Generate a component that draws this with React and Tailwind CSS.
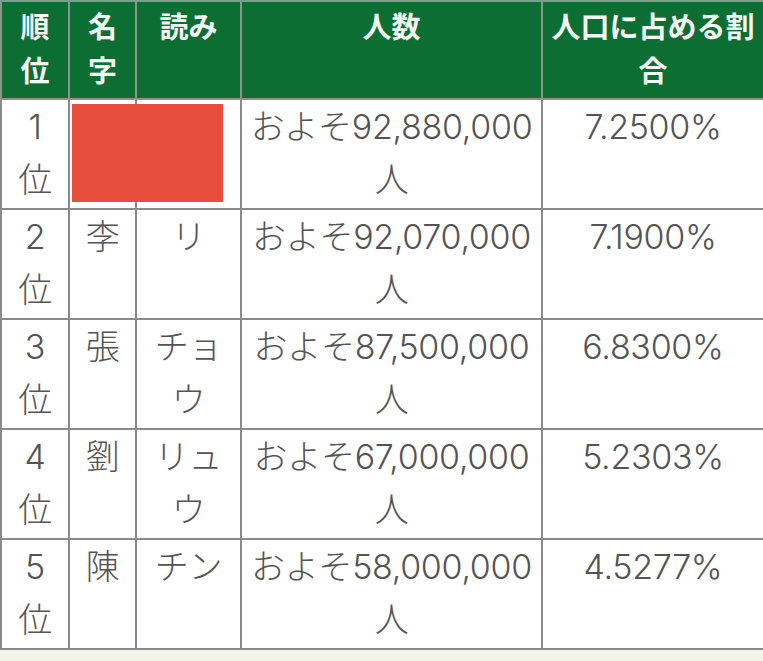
import React from "react";

const rows = [
  { rank: "1", name: "", yomi: [""], num: "92,880,000", pct: "7.2500%" },
  { rank: "2", name: "李", yomi: ["リ"], num: "92,070,000", pct: "7.1900%" },
  { rank: "3", name: "張", yomi: ["チョ", "ウ"], num: "87,500,000", pct: "6.8300%" },
  { rank: "4", name: "劉", yomi: ["リュ", "ウ"], num: "67,000,000", pct: "5.2303%" },
  { rank: "5", name: "陳", yomi: ["チン"], num: "58,000,000", pct: "4.5277%" },
];

const th =
  "border-2 border-[#8c948c] bg-[#0d6e34] text-[#f4f8f4] font-bold text-[29px] leading-[44px] align-top text-center pt-1 px-0 whitespace-nowrap";
const td =
  "border-2 border-[#8a8a8a] bg-white text-[#545454] text-[34px] leading-[53px] align-top text-center p-0 whitespace-nowrap tracking-[-0.3px]";

export default function App() {
  return (
    <div
      className="min-h-[661px] w-[763px] bg-[#f3f4e8]"
      style={{ fontFamily: 'Inter, "Noto Sans CJK JP", sans-serif' }}
    >
      <div className="relative w-[763px]">
        <table className="w-[763px] table-fixed border-collapse">
          <colgroup>
            <col className="w-[68px]" />
            <col className="w-[67px]" />
            <col className="w-[105px]" />
            <col className="w-[301px]" />
            <col className="w-[222px]" />
          </colgroup>
          <thead>
            <tr className="h-[98px]">
              <th className={th}>
                順<br />位
              </th>
              <th className={th}>
                名<br />字
              </th>
              <th className={th}>読み</th>
              <th className={th}>人数</th>
              <th className={th}>
                人口に占める割<br />合
              </th>
            </tr>
          </thead>
          <tbody>
            {rows.map((r) => (
              <tr key={r.rank} className="h-[110px]">
                <td className={td}>
                  <span className="font-light">{r.rank}</span>
                  <br />
                  <span className="font-light">位</span>
                </td>
                <td className={td}>
                  <span className="font-light">{r.name}</span>
                </td>
                <td className={td}>
                  {r.yomi.map((y, i) => (
                    <div key={i} className="font-light">
                      {y}
                    </div>
                  ))}
                </td>
                <td className={td}>
                  <div className="font-light">およそ{r.num}</div>
                  <div className="font-light">人</div>
                </td>
                <td className={td}>
                  <span className="font-light">{r.pct}</span>
                </td>
              </tr>
            ))}
          </tbody>
        </table>
        <div className="absolute left-[72px] top-[104px] h-[98px] w-[151px] bg-[#e84e3e]" />
      </div>
    </div>
  );
}
